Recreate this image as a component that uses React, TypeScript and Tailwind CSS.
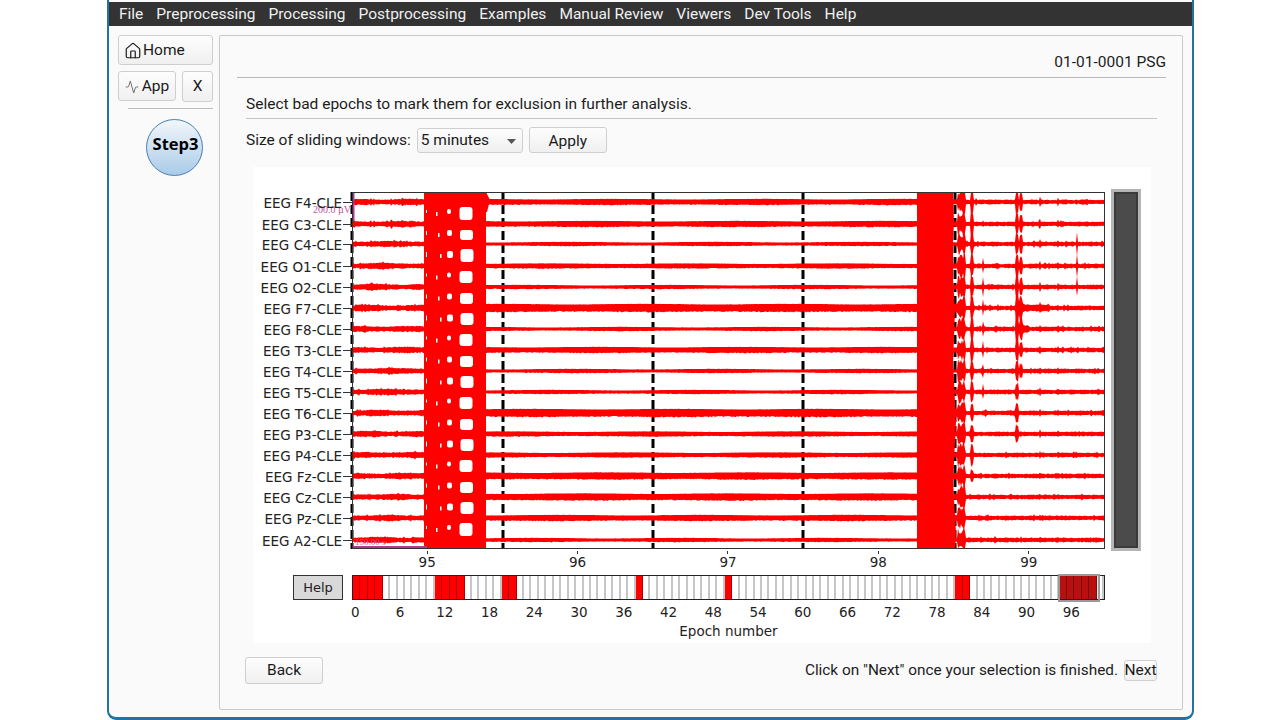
import React from "react";
import { Home, Activity } from "lucide-react";

const menu = ["File","Preprocessing","Processing","Postprocessing","Examples","Manual Review","Viewers","Dev Tools","Help"];
const channels = ["F4","C3","C4","O1","O2","F7","F8","T3","T4","T5","T6","P3","P4","Fz","Cz","Pz","A2"];
const ys = [10,32,52,74,95,116,137,158,179,200,221,242,263,284,305,326,348];
const thick = [5.5,5.5,3.5,4.5,3.5,7.5,3.5,5.5,3.5,3.5,7.5,4.5,4.5,6.5,6.5,5.5,3.5];
const red = new Set([0,1,2,3,11,12,13,14,20,21,38,50,81,82]);
const selected = new Set([95,96,97,98,99]);
const W = 753, H = 357, X0 = 352;

function rng(seed: number) {
  let s = seed;
  return () => { s = (s * 16807) % 2147483647; return s / 2147483647; };
}
// x, half-width, height, first channel, last channel
const spikes: [number, number, number, number, number][] = [
  [972, 2, 11, 0, 13],
  [983, 1, 7, 3, 9],
  [1017, 2, 10, 0, 11],
  [1021, 1.5, 7, 0, 8],
  [1040, 1, 3, 0, 16],
  [1077, 1, 11, 2, 4],
  [1058, 1, 2, 0, 16],
];
function trace(i: number) {
  const r = rng(1234 + i * 77);
  const top: string[] = [];
  const bot: string[] = [];
  const fade = i <= 7 ? 1 : i <= 12 ? 0.75 : 0.4;
  for (let x = 0; x < W; x += 1) {
    const px = X0 + x;
    let a = 1;
    if (px < 424) a = 2.2 + Math.sin(px / 9 + i) * 0.4 + r() * 0.9 + (r() > 0.95 ? 1.2 : 0);
    else if (px < 958) a = thick[i] / 2 + Math.sin(px / 23 + i) * 0.3 + r() * 0.2;
    else {
      a = 1.7 + r() * 0.8 + (r() > 0.96 ? 1.4 : 0);
      if (px < 966) a += 10 * (0.4 + r() * 0.6);
      for (const [sx, w, h, c0, c1] of spikes) {
        const d = Math.abs(px - sx);
        if (d < w && i >= c0 && i <= c1) a += h * fade * (0.7 + r() * 0.4);
      }
      if ((i === 5 || i === 6) && px > 1015 && px < 1030) a += 5 * r() * (1030 - px) / 15 + 1;
      if (i === 5 && px >= 1030 && px < 1050) a += 1;
    }
    top.push(`${x},${Math.max(1, ys[i] - a).toFixed(1)}`);
    bot.unshift(`${x},${Math.min(H - 1, ys[i] + a * (0.8 + r() * 0.3)).toFixed(1)}`);
  }
  return top.concat(bot).join(" ");
}

function Chart() {
  const gaps = ys.slice(0, -1).map((y, i) => [y, ys[i + 1]]);
  return (
    <svg width={W} height={H} className="block overflow-visible" viewBox={`0 0 ${W} ${H}`}>
      <rect x="0" y="0" width={W} height={H} fill="#fff" />
      {[0, 151, 301, 451, 603].map((x) => (
        <line key={x} x1={x} x2={x} y1="0" y2={H} stroke="#000" strokeWidth="3" strokeDasharray="9 4" />
      ))}
      {channels.map((_, i) => <polygon key={i} points={trace(i)} fill="#ff0000" />)}
      <rect x="72" y="0" width="62" height={H} fill="#ff0000" />
      <path d="M134 0 L138 8 L135 20 L134 20Z" fill="#ff0000" />
      <rect x="565" y="0" width="36" height={H} fill="#ff0000" />
      <path d="M601 0 L602 30 L600 70 L603 120 L601 170 L604 230 L601 290 L604 340 L603 357 L601 357Z" fill="#ff0000" />
      {gaps.map(([a, b], i) => {
        const j = (i * 7) % 3;
        return (
          <g key={i} fill="#fff">
            <rect x={108 + (j - 1) * 0.5} y={a + 5 + (j % 2)} width="13" height={b - a - 9 - (j % 2)} rx="3" />
            <rect x="95" y={(a + b) / 2 - 4} width={4 + j} height={5 + j} rx="2" />
            <rect x={84 + j * 2} y={(a + b) / 2 - 1} width="1.5" height="4" />
            <rect x="74" y={(a + b) / 2 - 3} width="1" height={3 + j} />
          </g>
        );
      })}
      <rect x="0" y="0" width="2.5" height="29" fill="#b03a8c" />
      <rect x="0" y="354" width="75" height="3" fill="#b03a8c" />
      <rect x="0.5" y="0.5" width={W - 1} height={H - 1} fill="none" stroke="#333" />
      <text x="-1" y="21" textAnchor="end" fontSize="10" fill="#c0559c" fontFamily="Liberation Serif, serif">200.0 µV</text>
      <text x="3" y="353" fontSize="9" fill="#c0559c" fontFamily="Liberation Serif, serif">150.00 s</text>
    </svg>
  );
}

const btn = "rounded-[3px] border border-[#cfcfcf] bg-gradient-to-b from-[#fdfdfd] to-[#f0f0f0] text-[15.5px] text-[#1a1a1a]";

export default function App() {
  return (
    <div className="w-[1280px] h-[720px] bg-white overflow-hidden font-['Roboto',sans-serif] text-[15.5px] text-[#1c1c1c]">
      <div className="ml-[107px] w-[1087px] h-[720px] bg-[#fafafa] border-x-2 border-b-[3px] border-[#2272a3] rounded-b-[9px] pt-[2px] overflow-hidden flex flex-col">
        <div className="h-[24px] bg-[#333333] text-[#f0f0f0] flex items-center pl-[10px] pt-[2px] gap-[13px] text-[15.5px] shrink-0">
          {menu.map((m) => <span key={m}>{m}</span>)}
        </div>
        <div className="flex pt-[9px] pl-[9px]">
          <div className="w-[95px] shrink-0">
            <button className={`${btn} w-[95px] h-[30px] flex items-center pl-[5px] pt-[1px] gap-[1px]`}>
              <Home size={18} strokeWidth={1.6} /> Home
            </button>
            <div className="flex mt-[6px] gap-[6px]">
              <button className={`${btn} w-[58px] h-[30px] flex items-center justify-center pt-[1px] gap-[3px]`}>
                <Activity size={14} strokeWidth={1.4} className="text-[#555]" /> App
              </button>
              <button className={`${btn} w-[31px] h-[31px]`}>X</button>
            </div>
            <div className="ml-[10px] mt-[6px] h-[1px] w-[85px] bg-[#bdbdbd]" />
            <div className="ml-[28px] mt-[10px] w-[57px] h-[57px] rounded-full border border-[#4a7fb0] bg-gradient-to-b from-[#f2f7fb] to-[#a9cbe8] flex items-center justify-center pb-[7px] pl-[2px] font-['Open_Sans',sans-serif] font-bold text-[16.5px] text-black">
              Step3
            </div>
          </div>
          <div className="ml-[6px] w-[964px] h-[675px] border border-[#c9c9c9] bg-[#fafafa] rounded-[2px] flex flex-col">
            <div className="h-[41px] flex items-end justify-end pr-[16px] pb-[3px]">01-01-0001 PSG</div>
            <div className="ml-[17px] mr-[16px] h-[1px] bg-[#b8b8b8]" />
            <div className="ml-[26px] mr-[25px] h-[41px] border-b border-[#c4c4c4] flex items-center pt-[14px]">
              Select bad epochs to mark them for exclusion in further analysis.
            </div>
            <div className="ml-[26px] mt-[8px] h-[26px] flex items-center">
              <span className="pt-[1px]">Size of sliding windows:</span>
              <div className={`${btn} ml-[6px] w-[106px] h-[25px] flex items-center justify-between pl-[3px] pr-[6px] pt-[2px]`}>
                5 minutes
                <svg width="9" height="5" viewBox="0 0 9 5"><path d="M0 0h9L4.5 5z" fill="#555" /></svg>
              </div>
              <button className={`${btn} ml-[6px] w-[78px] h-[26px] pt-[2px]`}>Apply</button>
            </div>
            <div className="ml-[33px] mt-[14px] w-[898px] h-[476px] bg-white flex flex-col font-['DejaVu_Sans',sans-serif] text-[13.5px] text-[#222]">
              <div className="flex mt-[22px] h-[362px]">
                <div className="w-[99px] pt-[13px] h-[361px] flex flex-col items-end shrink-0">
                  {channels.map((c, i) => (
                    <div key={c} className="relative flex items-start" style={{ height: i < 16 ? ys[i + 1] - ys[i] : 1 }}>
                      <span className="h-[15px] -mt-[6px] leading-[15px] whitespace-nowrap">EEG {c}-CLE</span>
                      <span className="ml-[1px] w-[9px] h-[1px] bg-[#333]" />
                    </div>
                  ))}
                </div>
                <div className="mt-[3px]"><Chart /></div>
                <div className="ml-[6px] w-[30px] h-[362px] border-[3px] border-[#b5b5b5] bg-[#4b4b4b] shadow-[inset_0_0_0_2px_#3a3a3a]" />
              </div>
              <div className="flex ml-[99px] mt-[2px] h-[18px]">
                {[95,96,97,98,99].map((n) => (
                  <div key={n} className="w-[150.4px] flex flex-col items-center">
                    <span className="w-[1px] h-[3px] -mt-[2px] bg-[#333]" />
                    <span className="leading-[17px]">{n}</span>
                  </div>
                ))}
              </div>
              <div className="flex mt-[4px] h-[26px]">
                <button className="ml-[40px] w-[50px] h-[25px] bg-[#d9d9d9] border border-[#333] text-[13px] text-[#222]">Help</button>
                <div className="relative ml-[9px] w-[753px] h-[25px] border border-[#222] grid grid-cols-[repeat(101,minmax(0,1fr))] bg-white">
                  {Array.from({ length: 101 }, (_, i) => (
                    <div
                      key={i}
                      className={
                        selected.has(i)
                          ? "border-r border-[#8a0d0d] bg-[#c81212]"
                          : red.has(i)
                          ? "border-r border-[#b00000] bg-[#ff0000]"
                          : "border-r-2 border-[#c6c6c6]"
                      }
                    />
                  ))}
                  <div className="absolute left-[705px] -top-[2px] w-[42px] h-[28px] border-[2px] border-[#9a9a9a] bg-[#00000014]" />
                </div>
              </div>
              <div className="flex ml-[80px] mt-[3px] h-[17px]">
                {Array.from({ length: 17 }, (_, i) => i * 6).map((n) => (
                  <div key={n} className="w-[44.75px] text-center leading-[17px] shrink-0">{n}</div>
                ))}
              </div>
              <div className="ml-[99px] w-[753px] text-center leading-[17px] mt-[2px]">Epoch number</div>
            </div>
            <div className="ml-[25px] mr-[25px] mt-[14px] flex items-center justify-between">
              <button className={`${btn} w-[78px] h-[27px]`}>Back</button>
              <div className="flex items-center gap-[6px]">
                <span className="text-[15.35px]">Click on "Next" once your selection is finished.</span>
                <button className={`${btn} w-[33px] h-[21px] flex items-center justify-center`}>Next</button>
              </div>
            </div>
          </div>
        </div>
      </div>
    </div>
  );
}
